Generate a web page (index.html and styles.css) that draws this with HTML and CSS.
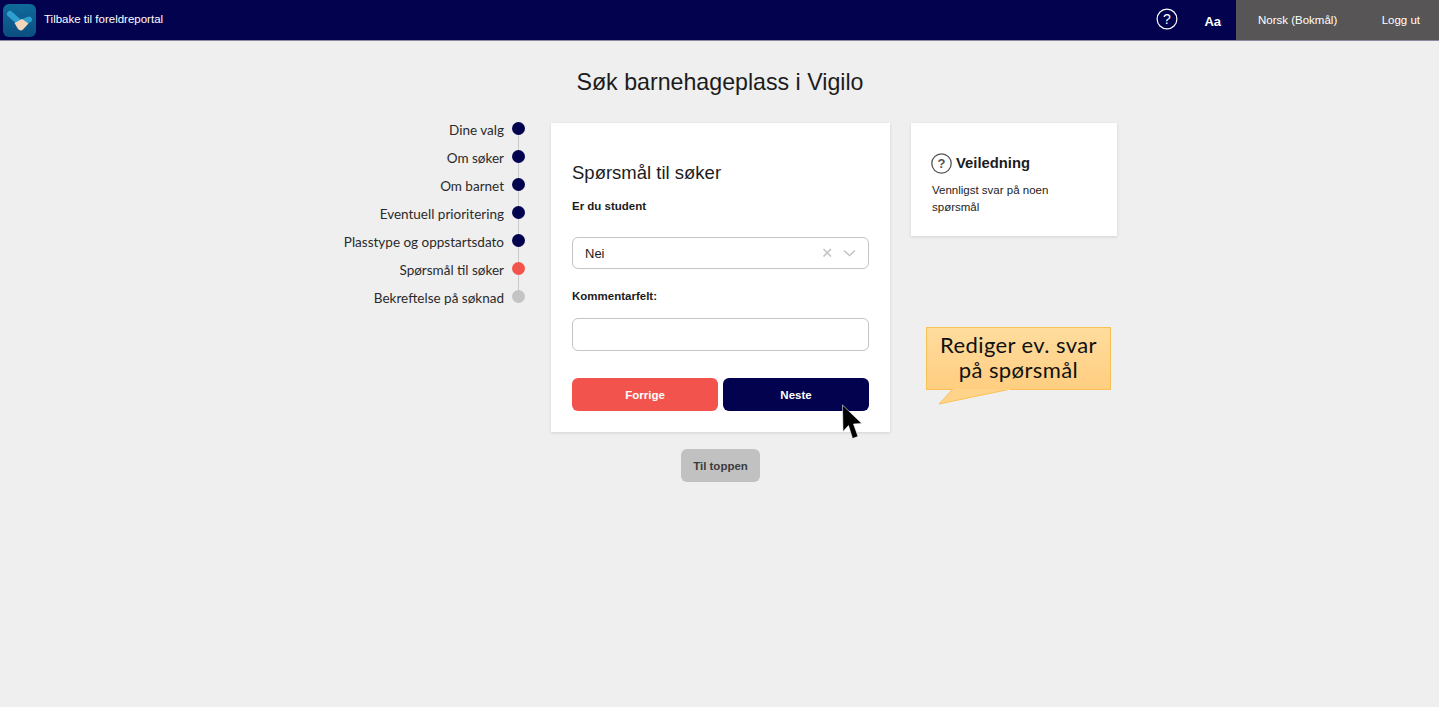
FILE: index.html
```html
<!DOCTYPE html>
<html lang="no">
<head>
	<meta charset="utf-8">
	<title>Søk barnehageplass i Vigilo</title>
	<link rel="stylesheet" href="styles.css">
</head>
<body>

<header class="topbar">
	<a class="topbarBack">
		<svg class="logo" viewBox="0 0 33 33" width="33" height="33">
			<defs>
				<linearGradient id="logoBg" x1="0" y1="0" x2="0" y2="1">
					<stop offset="0" stop-color="#0f6a9a"/>
					<stop offset="1" stop-color="#0b4f80"/>
				</linearGradient>
			</defs>
			<rect width="33" height="33" rx="6" fill="url(#logoBg)"/>
			<path d="M7 10 L16 18" stroke="#2f9fd0" stroke-width="6" stroke-linecap="round" fill="none"/>
			<path d="M18 19 L26 15.500" stroke="#2f9fd0" stroke-width="6" stroke-linecap="round" fill="none"/>
			<path d="M11.500 19 L19 15 L25.500 19.500 L20 25.500 Q17.500 27.500 15 25 Z" fill="#f4d6bb"/>
		</svg>
		<span class="topbarBackText">Tilbake til foreldreportal</span>
	</a>
	<div class="topbarTools">
		<svg class="helpIcon" viewBox="0 0 22 22" width="22" height="22">
			<circle cx="11" cy="11" r="9.900" fill="none" stroke="#fff" stroke-width="1.200"/>
			<text x="11" y="15.600" text-anchor="middle" class="helpMark">?</text>
		</svg>
		<span class="fontSize">Aa</span>
	</div>
	<div class="topbarUser">
		<span>Norsk (Bokmål)</span>
		<span>Logg ut</span>
	</div>
</header>

<main class="page">
	<h1 class="pageTitle">Søk barnehageplass i Vigilo</h1>

	<div class="columns">
		<ol class="steps">
			<li class="step stepDone"><span>Dine valg</span><i></i></li>
			<li class="step stepDone"><span>Om søker</span><i></i></li>
			<li class="step stepDone"><span>Om barnet</span><i></i></li>
			<li class="step stepDone"><span>Eventuell prioritering</span><i></i></li>
			<li class="step stepDone"><span>Plasstype og oppstartsdato</span><i></i></li>
			<li class="step stepActive"><span>Spørsmål til søker</span><i></i></li>
			<li class="step stepTodo"><span>Bekreftelse på søknad</span><i></i></li>
		</ol>

		<div class="middle">
			<section class="card">
				<h2 class="cardTitle">Spørsmål til søker</h2>
				<label class="fieldLabel">Er du student</label>
				<div class="select">
					<span>Nei</span>
					<svg viewBox="0 0 34 12" width="34" height="12">
						<path d="M1.500 2 L9 9.500 M9 2 L1.500 9.500" stroke="#c4c4c4" stroke-width="1.600" fill="none"/>
						<path d="M22 3.500 L27.500 8.500 L33 3.500" stroke="#c4c4c4" stroke-width="1.600" fill="none"/>
					</svg>
				</div>
				<label class="fieldLabel fieldLabelSecond">Kommentarfelt:</label>
				<div class="textInput"></div>
				<div class="buttons">
					<button class="btn btnPrev">Forrige</button>
					<button class="btn btnNext">Neste</button>
				</div>
			</section>
			<button class="toTop">Til toppen</button>
		</div>

		<aside class="guide">
			<h3 class="guideTitle">
				<svg class="guideIcon" viewBox="0 0 21 21" width="21" height="21">
					<circle cx="10.500" cy="10.500" r="9.700" fill="none" stroke="#555" stroke-width="1.300"/>
					<text x="10.500" y="15" text-anchor="middle" class="guideMark">?</text>
				</svg>
				Veiledning
			</h3>
			<p class="guideText">Vennligst svar på noen spørsmål</p>
		</aside>
	</div>
</main>

<div class="callout">
	<svg class="calloutTail" viewBox="0 0 72 16" width="72" height="16">
		<path d="M14 0 L0 15 L72 0" fill="#ffd48a" stroke="#f9c154" stroke-width="1"/>
		<rect x="15" y="0" width="56" height="1" fill="#ffd48a"/>
	</svg>
	Rediger ev. svar<br>på spørsmål
</div>

<svg class="cursor" viewBox="0 0 22 37" width="22" height="37">
	<path d="M1.500 1 L2 27.500 L7.500 21.500 L11.500 34.500 L17 32.500 L12.500 20 L20.800 19.500 Z" fill="#000" stroke="#fff" stroke-width=".6"/>
</svg>

</body>
</html>
```

FILE: styles.css
```css
html, body {
	margin: 0;
	padding: 0;
}
body {
	background-color: #efefef;
	font-family: "Liberation Sans", Arial, sans-serif;
	color: #1c1c1c;
	min-height: 707px;
	position: relative;
	overflow: hidden;
}

.topbar {
	display: flex;
	align-items: stretch;
	height: 40px;
	background-color: #02024f;
	border-bottom: 1px solid #8a8aa0;
	color: #fff;
}
.topbarBack {
	display: flex;
	align-items: center;
	gap: 8px;
	padding-left: 3px;
	font-size: 11.500px;
	flex: 1;
}
.topbarBackText {
	padding-bottom: 2px;
}
.logo {
	display: block;
}
.topbarTools {
	display: flex;
	align-items: center;
	gap: 26px;
	padding-right: 15px;
}
.helpIcon {
	margin-top: -2px;
}
.helpMark {
	font-size: 14px;
	fill: #fff;
	font-family: "Liberation Sans", sans-serif;
}
.fontSize {
	font-size: 13px;
	font-weight: bold;
	padding-top: 3px;
}
.topbarUser {
	display: flex;
	align-items: center;
	justify-content: space-between;
	box-sizing: border-box;
	width: 203px;
	padding: 0 19px 0 22px;
	background-color: #575555;
	font-size: 11.500px;
}

.pageTitle {
	margin: 28px 0 0;
	padding-left: 1px;
	font-size: 23.200px;
	font-weight: normal;
	line-height: 27px;
	text-align: center;
}

.columns {
	display: grid;
	grid-template-columns: 1fr 339px 1fr;
	column-gap: 21px;
	margin-top: 27px;
	padding-left: 2px;
	align-items: start;
}

.steps {
	list-style: none;
	margin: -9px 5px 0 0;
	padding: 0;
	justify-self: end;
	font-family: "Lato", sans-serif;
	font-size: 13.500px;
	color: #2a2a2a;
}
.step {
	display: flex;
	align-items: center;
	justify-content: flex-end;
	gap: 8px;
	height: 28px;
	position: relative;
}
.step span {
	padding-top: 4px;
}
.step i {
	display: block;
	width: 13px;
	height: 13px;
	border-radius: 50%;
	position: relative;
	z-index: 1;
}
.step:not(:last-child)::after {
	content: "";
	position: absolute;
	right: 6px;
	top: 14px;
	width: 1px;
	height: 28px;
	background-color: #c9c9c9;
}
.stepDone i { background-color: #02024f; }
.stepActive i { background-color: #f2544d; }
.stepTodo i { background-color: #c4c4c4; }

.middle {
	display: flex;
	flex-direction: column;
	align-items: center;
}
.card {
	align-self: stretch;
	box-sizing: border-box;
	height: 309px;
	padding: 39px 21px 0;
	background-color: #fff;
	box-shadow: 0 1px 3px rgba(0,0,0,.12);
}
.cardTitle {
	margin: 0;
	font-size: 18.500px;
	font-weight: normal;
	line-height: 22px;
}
.fieldLabel {
	display: block;
	margin-top: 15px;
	font-size: 11.500px;
	font-weight: bold;
	line-height: 14px;
}
.fieldLabelSecond {
	margin-top: 20px;
}
.select, .textInput {
	box-sizing: border-box;
	border: 1px solid #c4c4c4;
	border-radius: 6px;
	background-color: #fff;
}
.select {
	display: flex;
	align-items: center;
	justify-content: space-between;
	height: 32px;
	margin-top: 24px;
	padding: 0 12px;
	font-size: 13px;
}
.textInput {
	height: 33px;
	margin-top: 15px;
}
.buttons {
	display: flex;
	gap: 5px;
	margin-top: 27px;
}
.btn {
	flex: 1;
	height: 33px;
	border: 0;
	border-radius: 6px;
	color: #fff;
	font-family: "Liberation Sans", sans-serif;
	font-size: 11.500px;
	font-weight: bold;
}
.btnPrev { background-color: #f2544d; }
.btnNext { background-color: #02024f; }
.toTop {
	width: 79px;
	height: 33px;
	margin-top: 17px;
	padding: 0;
	border: 0;
	border-radius: 6px;
	background-color: #c1c1c1;
	color: #3c3c3c;
	font-family: "Liberation Sans", sans-serif;
	font-size: 11.500px;
	font-weight: bold;
}

.guide {
	box-sizing: border-box;
	width: 206px;
	height: 113px;
	padding: 30px 49px 0 21px;
	background-color: #fff;
	box-shadow: 0 1px 3px rgba(0,0,0,.12);
}
.guideTitle {
	display: flex;
	align-items: center;
	gap: 4px;
	margin: 0;
	font-size: 14.800px;
	font-weight: bold;
	line-height: 21px;
	white-space: nowrap;
}
.guideIcon {
	margin-left: -1px;
}
.guideMark {
	font-size: 13px;
	fill: #555;
	font-weight: bold;
	font-family: "Liberation Sans", sans-serif;
}
.guideText {
	margin: 8px 0 0;
	font-size: 11.500px;
	line-height: 17px;
}

.callout {
	position: absolute;
	left: 926px;
	top: 327px;
	width: 185px;
	height: 63px;
	box-sizing: border-box;
	border: 1px solid #f9c154;
	background: linear-gradient(#ffdc9e, #ffce80);
	font-family: "Lato", sans-serif;
	font-size: 22px;
	letter-spacing: .4px;
	line-height: 25px;
	text-align: center;
	padding-top: 4px;
	color: #111;
}
.calloutTail {
	position: absolute;
	left: 12px;
	top: 61px;
}
.cursor {
	position: absolute;
	left: 841px;
	top: 404px;
}
```
